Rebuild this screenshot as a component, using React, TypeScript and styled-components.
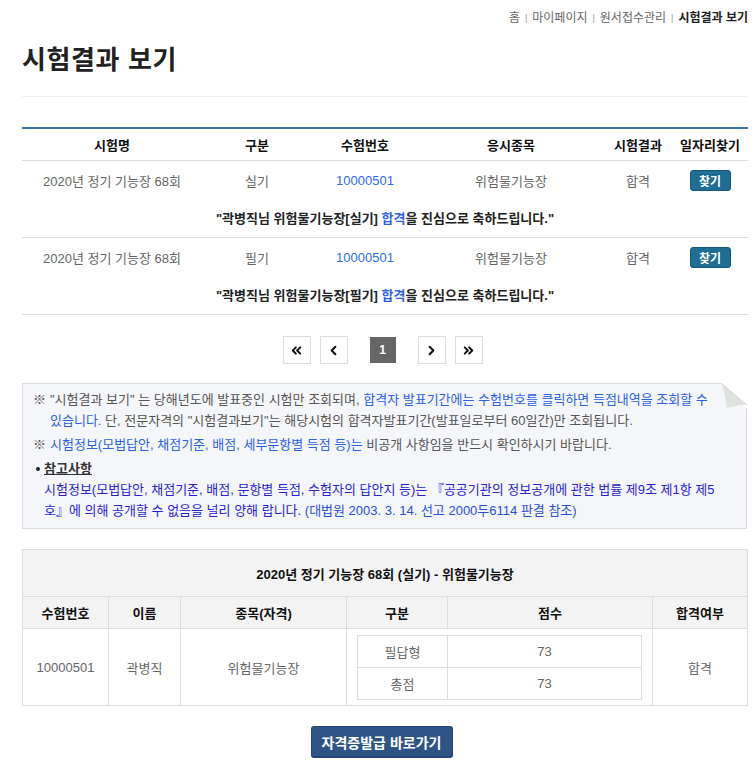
import React from 'react';
import { styled, createGlobalStyle } from 'styled-components';
import { ChevronsLeft, ChevronLeft, ChevronRight, ChevronsRight } from 'lucide-react';

const GlobalStyle = createGlobalStyle`
    body {
        margin: 0;
        background: #fff;
        font-family: "Liberation Sans", "Noto Sans CJK KR", sans-serif;
        font-size: 13px;
        color: #333;
    }
`;

const results = [
    { name: '2020년 정기 기능장 68회', type: '실기', no: '10000501', subject: '위험물기능장', result: '합격' },
    { name: '2020년 정기 기능장 68회', type: '필기', no: '10000501', subject: '위험물기능장', result: '합격' },
];

export default function App() {
    return (
        <Page>
            <GlobalStyle />
            <Breadcrumb>
                <Crumb>홈</Crumb>
                <Sep>|</Sep>
                <Crumb>마이페이지</Crumb>
                <Sep>|</Sep>
                <Crumb>원서접수관리</Crumb>
                <Sep>|</Sep>
                <Crumb current>시험결과 보기</Crumb>
            </Breadcrumb>
            <Title>시험결과 보기</Title>
            <Divider />

            <ResultTable>
                <colgroup>
                    <col style={{ width: 180 }} />
                    <col style={{ width: 110 }} />
                    <col style={{ width: 106 }} />
                    <col style={{ width: 186 }} />
                    <col style={{ width: 68 }} />
                    <col style={{ width: 76 }} />
                </colgroup>
                <thead>
                    <tr>
                        <Th>시험명</Th>
                        <Th>구분</Th>
                        <Th>수험번호</Th>
                        <Th>응시종목</Th>
                        <Th>시험결과</Th>
                        <Th>일자리찾기</Th>
                    </tr>
                </thead>
                <tbody>
                    {results.map((r, i) => (
                        <React.Fragment key={i}>
                            <tr>
                                <Td>{r.name}</Td>
                                <Td>{r.type}</Td>
                                <Td><NumLink>{r.no}</NumLink></Td>
                                <Td>{r.subject}</Td>
                                <Td>{r.result}</Td>
                                <Td><FindButton>찾기</FindButton></Td>
                            </tr>
                            <tr>
                                <Message colSpan={6}>
                                    "곽병직님 {r.subject}[{r.type}] <Blue>합격</Blue>을 진심으로 축하드립니다."
                                </Message>
                            </tr>
                        </React.Fragment>
                    ))}
                </tbody>
            </ResultTable>

            <Pager>
                <PageGroup>
                    <PageButton><ChevronsLeft size={15} strokeWidth={3.2} /></PageButton>
                    <PageButton><ChevronLeft size={15} strokeWidth={3.2} /></PageButton>
                </PageGroup>
                <CurrentPage>1</CurrentPage>
                <PageGroup>
                    <PageButton><ChevronRight size={15} strokeWidth={3.2} /></PageButton>
                    <PageButton><ChevronsRight size={15} strokeWidth={3.2} /></PageButton>
                </PageGroup>
            </Pager>

            <Notice>
                <Fold viewBox="0 0 26 26" width="26" height="26">
                    <polygon points="0,0 26,0 26,26" fill="#fff" />
                    <path d="M0 0 L26 22 C20 21 14 23 6 25 C4 16 4 8 0 0 Z" fill="#dfe2df" />
                    <path d="M0 0 L26 22" stroke="#d0d3d0" strokeWidth="0.8" fill="none" />
                </Fold>
                <NoteItem>
                    <Mark>※</Mark>
                    <span>
                        "시험결과 보기" 는 당해년도에 발표중인 시험만 조회되며, <Blue>합격자 발표기간에는 수험번호를 클릭하면 득점내역을 조회할 수<br />있습니다.</Blue> 단, 전문자격의 "시험결과보기"는 해당시험의 합격자발표기간(발표일로부터 60일간)만 조회됩니다.
                    </span>
                </NoteItem>
                <NoteItem>
                    <Mark>※</Mark>
                    <span>
                        <Blue>시험정보(모법답안, 채점기준, 배점, 세부문항별 득점 등)는</Blue> 비공개 사항임을 반드시 확인하시기 바랍니다.
                    </span>
                </NoteItem>
                <RefBlock>
                    <RefTitle>참고사항</RefTitle>
                    <RefText>
                        시험정보(모법답안, 채점기준, 배점, 문항별 득점, 수험자의 답안지 등)는 『공공기관의 정보공개에 관한 법률 제9조 제1항 제5<br />호』에 의해 공개할 수 없음을 널리 양해 랍니다. <Blue>(대법원 2003. 3. 14. 선고 2000두6114 판결 참조)</Blue>
                    </RefText>
                </RefBlock>
            </Notice>

            <ScoreTable>
                <colgroup>
                    <col style={{ width: 86 }} />
                    <col style={{ width: 72 }} />
                    <col style={{ width: 166 }} />
                    <col style={{ width: 101 }} />
                    <col style={{ width: 205 }} />
                    <col style={{ width: 95 }} />
                </colgroup>
                <thead>
                    <tr>
                        <Caption colSpan={6}>2020년 정기 기능장 68회 (실기) - 위험물기능장</Caption>
                    </tr>
                    <tr>
                        <Sth>수험번호</Sth>
                        <Sth>이름</Sth>
                        <Sth>종목(자격)</Sth>
                        <Sth>구분</Sth>
                        <Sth>점수</Sth>
                        <Sth>합격여부</Sth>
                    </tr>
                </thead>
                <tbody>
                    <tr>
                        <Std>10000501</Std>
                        <Std>곽병직</Std>
                        <Std>위험물기능장</Std>
                        <InnerCell colSpan={2}>
                            <InnerTable>
                                <colgroup>
                                    <col style={{ width: 90 }} />
                                    <col />
                                </colgroup>
                                <tbody>
                                    <tr>
                                        <InnerTd>필답형</InnerTd>
                                        <InnerTd>73</InnerTd>
                                    </tr>
                                    <tr>
                                        <InnerTd>총점</InnerTd>
                                        <InnerTd>73</InnerTd>
                                    </tr>
                                </tbody>
                            </InnerTable>
                        </InnerCell>
                        <Std>합격</Std>
                    </tr>
                </tbody>
            </ScoreTable>

            <Actions>
                <IssueButton>자격증발급 바로가기</IssueButton>
            </Actions>
        </Page>
    );
}

const Page = styled.div`
    width: 725px;
    padding: 0 7px 6px 22px;
`;

const Breadcrumb = styled.nav`
    display: flex;
    justify-content: flex-end;
    align-items: center;
    gap: 5px;
    padding-top: 8px;
    height: 17px;
    margin-right: -1px;
    font-size: 12px;
`;

const Crumb = styled.span<{ current?: boolean }>`
    color: ${p => (p.current ? '#222' : '#666')};
    font-weight: ${p => (p.current ? 'bold' : 'normal')};
`;

const Sep = styled.span`
    color: #999;
    font-size: 9px;
    position: relative;
    top: 1px;
`;

const Title = styled.h1`
    margin: 18px 0 0;
    font-size: 26px;
    line-height: 35px;
    font-weight: bold;
    color: #222;
    letter-spacing: 0.6px;
`;

const Divider = styled.hr`
    margin: 18px 0 0;
    border: none;
    border-top: 1px solid #eee;
`;

const ResultTable = styled.table`
    margin-top: 30px;
    width: 100%;
    table-layout: fixed;
    border-collapse: collapse;
    border-top: 2px solid #3a74b1;
`;

const Th = styled.th`
    height: 31px;
    font-weight: bold;
    font-size: 13px;
    color: #111;
    border-bottom: 1px solid #ddd;
    padding: 0;
`;

const Td = styled.td`
    height: 38px;
    text-align: center;
    color: #666;
    padding: 0;
`;

const NumLink = styled.a`
    color: #2e6be6;
    cursor: pointer;
`;

const FindButton = styled.button`
    width: 41px;
    height: 21px;
    border: 1px solid #155978;
    border-radius: 3px;
    background: #1f6d93;
    color: #fff;
    font-family: inherit;
    font-size: 12px;
    font-weight: bold;
    padding: 0;
`;

const Message = styled.td`
    height: 37px;
    text-align: center;
    font-weight: bold;
    color: #222;
    border-bottom: 1px solid #ddd;
    padding: 0 0 1px;
`;

const Blue = styled.span`
    color: #2e5fe0;
`;

const Pager = styled.div`
    display: flex;
    justify-content: center;
    align-items: center;
    gap: 22px;
    margin-top: 21px;
    padding-right: 4px;
`;

const PageGroup = styled.div`
    display: flex;
    gap: 9px;
`;

const PageButton = styled.button`
    width: 28px;
    height: 28px;
    padding: 0;
    display: flex;
    align-items: center;
    justify-content: center;
    border: 1px solid #ddd;
    background: #fff;
    color: #111;
`;

const CurrentPage = styled.span`
    width: 26px;
    height: 26px;
    display: flex;
    align-items: center;
    justify-content: center;
    background: #666;
    color: #fff;
    font-weight: bold;
    font-size: 12px;
`;

const Notice = styled.div`
    position: relative;
    margin-top: 19px;
    padding: 5px 14px 7px 10px;
    background: #f5f6fa;
    border: 1px solid #ddd;
    color: #555;
    line-height: 21px;
`;

const Fold = styled.svg`
    position: absolute;
    top: -1px;
    right: -1px;
`;

const NoteItem = styled.p`
    display: flex;
    margin: 0 0 3px;
`;

const Mark = styled.span`
    flex: none;
    width: 17px;
`;

const RefBlock = styled.div`
    margin-top: 1px;
    padding-left: 11px;
`;

const RefTitle = styled.div`
    position: relative;
    font-weight: bold;
    color: #333;
    text-decoration: underline;
    &::before {
        content: '';
        position: absolute;
        left: -8px;
        top: 9px;
        width: 4px;
        height: 4px;
        border-radius: 50%;
        background: #222;
    }
`;

const RefText = styled.div`
    color: #2a1fcf;
    & ${Blue} {
        color: #2a4fd8;
    }
`;

const ScoreTable = styled.table`
    margin-top: 20px;
    width: 100%;
    table-layout: fixed;
    border-collapse: collapse;
    border: 1px solid #ddd;
`;

const Caption = styled.th`
    height: 46px;
    background: #f3f3f3;
    font-weight: bold;
    color: #111;
    border-bottom: 1px solid #ddd;
    padding: 0;
`;

const Sth = styled.th`
    height: 31px;
    background: #f3f3f3;
    font-weight: bold;
    color: #111;
    border: 1px solid #ddd;
    padding: 0;
`;

const Std = styled.td`
    height: 76px;
    text-align: center;
    color: #666;
    border: 1px solid #ddd;
    padding: 0;
`;

const InnerCell = styled.td`
    border: 1px solid #ddd;
    padding: 4px 10px 4px 10px;
`;

const InnerTable = styled.table`
    width: 100%;
    border-collapse: collapse;
    table-layout: fixed;
    border: 1px solid #ddd;
`;

const InnerTd = styled.td`
    height: 31px;
    text-align: center;
    color: #666;
    border: 1px solid #ddd;
    padding: 0;
`;

const Actions = styled.div`
    display: flex;
    justify-content: center;
    margin-top: 20px;
    padding-right: 6px;
`;

const IssueButton = styled.button`
    width: 142px;
    height: 32px;
    border: 1px solid #244573;
    border-bottom-width: 2px;
    border-radius: 3px;
    background: #2e5486;
    color: #fff;
    font-family: inherit;
    font-size: 14px;
    font-weight: bold;
    padding: 0;
`;
